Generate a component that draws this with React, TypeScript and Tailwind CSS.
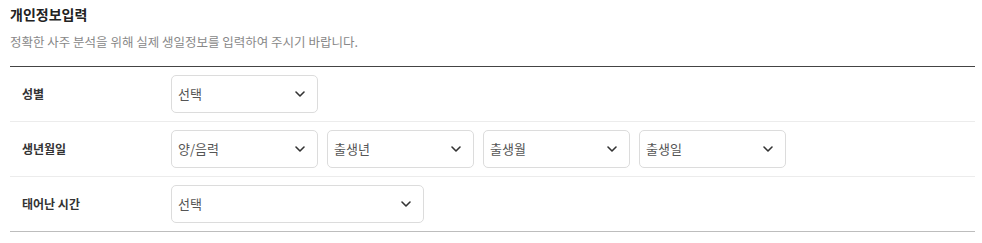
import React from "react";

const Chevron = () => (
  <svg width="12" height="12" viewBox="0 0 12 12" fill="none" className="shrink-0">
    <path d="M2 4l4 4 4-4" stroke="#333" strokeWidth="1.6" strokeLinecap="round" strokeLinejoin="round" />
  </svg>
);

const FakeSelect = ({ label, width }: { label: string; width: string }) => (
  <button
    type="button"
    className={`${width} h-[38px] flex items-center justify-between pl-[6px] pr-[11px] border border-[#dcdcdc] rounded-[5px] bg-white text-[13px] text-[#555]`}
  >
    <span>{label}</span>
    <Chevron />
  </button>
);

const Row = ({ title, children }: { title: string; children: React.ReactNode }) => (
  <div className="flex items-center pt-[8px] pb-[8px] border-b border-[#ececec] last:border-[#bdbdbd]">
    <div className="w-[161px] pl-[12px] text-[12px] font-bold text-[#333]">{title}</div>
    <div className="flex gap-[9px]">{children}</div>
  </div>
);

export default function App() {
  return (
    <div className="bg-white min-h-[243px] px-[10px] pr-[7px] pt-[4px]" style={{ fontFamily: '"Noto Sans CJK KR", "Noto Sans", sans-serif' }}>
      <h2 className="text-[14px] leading-[20px] font-bold text-[#222]">개인정보입력</h2>
      <p className="mt-[10px] text-[12.5px] leading-[16px] text-[#888]">
        정확한 사주 분석을 위해 실제 생일정보를 입력하여 주시기 바랍니다.
      </p>
      <div className="mt-[16px] border-t border-[#444]">
        <Row title="성별">
          <FakeSelect label="선택" width="w-[147px]" />
        </Row>
        <Row title="생년월일">
          <FakeSelect label="양/음력" width="w-[147px]" />
          <FakeSelect label="출생년" width="w-[147px]" />
          <FakeSelect label="출생월" width="w-[147px]" />
          <FakeSelect label="출생일" width="w-[147px]" />
        </Row>
        <Row title="태어난 시간">
          <FakeSelect label="선택" width="w-[253px]" />
        </Row>
      </div>
    </div>
  );
}
